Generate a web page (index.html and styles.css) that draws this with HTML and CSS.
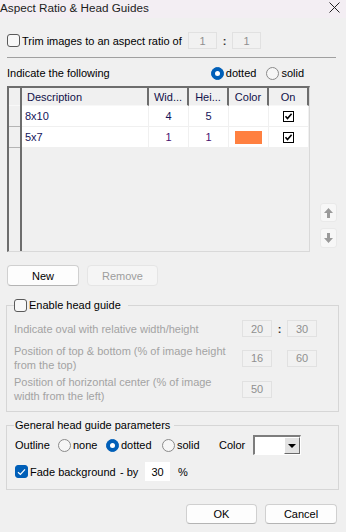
FILE: index.html
```html
<!DOCTYPE html>
<html lang="en">
<head>
    <meta charset="utf-8">
    <title>Aspect Ratio &amp; Head Guides</title>
<link rel="stylesheet" href="styles.css">
</head>
<body>
    <div id="titlebar">
        <span class="title">Aspect Ratio &amp; Head Guides</span>
        <svg class="close" width="11" height="11" viewBox="0 0 11 11"><path d="M0.5 0.5L10.5 10.5M10.5 0.5L0.5 10.5" stroke="#222" stroke-width="1"/></svg>
    </div>
    <div id="dialog">
        <div class="trimRow">
            <span class="check"></span>
            <span class="trimLabel">Trim images to an aspect ratio of</span>
            <span class="field off">1</span><span class="colon">:</span><span class="field off">1</span>
        </div>
        <div class="rule"></div>
        <div class="indicateRow">
            <span>Indicate the following</span>
            <span class="radios">
                <span class="radio on"></span><span class="rlabel">dotted</span>
                <span class="radio"></span><span class="rlabel">solid</span>
            </span>
        </div>
        <div class="gridRow">
            <div class="grid">
                <div class="gridSide">
                    <div class="corner"></div>
                    <div class="rowHead"></div>
                    <div class="rowHead"></div>
                </div>
                <div class="gridMain">
                    <div class="gridLine head">
                        <span class="desc">Description</span><span>Wid...</span><span>Hei...</span><span>Color</span><span>On</span>
                    </div>
                    <div class="gridLine">
                        <span class="desc">8x10</span><span>4</span><span>5</span><span></span>
                        <span><svg width="11" height="11" viewBox="0 0 11 11"><rect x="0.5" y="0.5" width="10" height="10" fill="#fff" stroke="#000"/><path d="M2.5 5.2L4.5 7.5L8.6 2.8" fill="none" stroke="#000" stroke-width="1.6"/></svg></span>
                    </div>
                    <div class="gridLine">
                        <span class="desc">5x7</span><span class="purple">1</span><span class="purple">1</span><span><i class="swatch"></i></span>
                        <span><svg width="11" height="11" viewBox="0 0 11 11"><rect x="0.5" y="0.5" width="10" height="10" fill="#fff" stroke="#000"/><path d="M2.5 5.2L4.5 7.5L8.6 2.8" fill="none" stroke="#000" stroke-width="1.6"/></svg></span>
                    </div>
                </div>
            </div>
            <div class="movers">
                <button class="mover"><svg width="9" height="10" viewBox="0 0 9 10"><path d="M4.5 0L9 5H6V10H3V5H0Z" fill="#9a9a9a"/></svg></button>
                <button class="mover"><svg width="9" height="10" viewBox="0 0 9 10"><path d="M4.5 10L9 5H6V0H3V5H0Z" fill="#9a9a9a"/></svg></button>
            </div>
        </div>
        <div class="btnRow">
            <button class="btn">New</button>
            <button class="btn off">Remove</button>
        </div>

        <fieldset class="group guide">
            <legend><span class="check"></span><span>Enable head guide</span></legend>
            <div class="guideRow first">
                <span class="guideLabel">Indicate oval with relative width/height</span>
                <span class="field off">20</span><span class="colon">:</span><span class="field off">30</span>
            </div>
            <div class="guideRow second">
                <span class="guideLabel">Position of top &amp; bottom (% of image height from the top)</span>
                <span class="field off">16</span><span class="colon"></span><span class="field off">60</span>
            </div>
            <div class="guideRow third">
                <span class="guideLabel">Position of horizontal center (% of image width from the left)</span>
                <span class="field off">50</span>
            </div>
        </fieldset>

        <fieldset class="group general">
            <legend>General head guide parameters</legend>
            <div class="outlineRow">
                <span class="olabel">Outline</span>
                <span class="opt none"><span class="radio"></span><span class="rlabel">none</span></span>
                <span class="opt dotted"><span class="radio on"></span><span class="rlabel">dotted</span></span>
                <span class="opt solid"><span class="radio"></span><span class="rlabel">solid</span></span>
                <span class="colorLabel">Color</span>
                <span class="combo"><span class="comboField"></span><span class="comboBtn"><i></i></span></span>
            </div>
            <div class="fadeRow">
                <span class="check on"><svg width="9" height="8" viewBox="0 0 9 8"><path d="M1 4.2L3.4 6.5L8 1.3" fill="none" stroke="#fff" stroke-width="1.2"/></svg></span>
                <span class="fadeLabel">Fade background</span>
                <span class="by">- by</span>
                <span class="field white">30</span>
                <span class="pct">%</span>
            </div>
        </fieldset>

        <div class="footer">
            <button class="btn ok">OK</button>
            <button class="btn cancel">Cancel</button>
        </div>
    </div>
</body>
</html>
```

FILE: styles.css
```css
body{
    margin: 0;
    width: 346px;
    height: 532px;
    overflow: hidden;
    background-color: #f0f0f0;
    font-family: 'Liberation Sans', Arial, sans-serif;
    font-size: 11px;
    color: #000;
}
#titlebar{
    height: 18px;
    background-color: #f3eef3;
    display: flex;
    justify-content: space-between;
    align-items: flex-start;
}
.title{
    font-size: 11.7px;
    line-height: 14px;
    color: #1c1c1c;
    margin-top: 1px;
}
.close{
    margin: 2px 6px 0 0;
}
#dialog{
    padding: 0 7px;
}

/* checkboxes and radios */
.check{
    width: 11px;
    height: 11px;
    border: 1px solid #5a5a5a;
    border-radius: 3px;
    background-color: #f8f8f8;
    display: inline-flex;
    align-items: center;
    justify-content: center;
    flex: none;
}
.check.on{
    background-color: #005fb8;
    border-color: #005fb8;
}
.radio{
    width: 11px;
    height: 11px;
    border: 1px solid #8a8a8a;
    border-radius: 50%;
    background-color: #f6f6f6;
    display: inline-flex;
    align-items: center;
    justify-content: center;
    flex: none;
}
.radio.on{
    background-color: #005fb8;
    border-color: #005fb8;
}
.radio.on::after{
    content: "";
    width: 5px;
    height: 5px;
    border-radius: 50%;
    background-color: #fff;
}
.rlabel{
    margin-left: 2px;
}

/* small text boxes */
.field{
    width: 29px;
    height: 17px;
    box-sizing: border-box;
    border: 1px solid #e1e1e1;
    background-color: #f1f1f1;
    display: inline-flex;
    align-items: center;
    justify-content: center;
    flex: none;
}
.field.off{
    color: #8f8f8f;
}
.field.white{
    background-color: #fff;
    border-color: #fff;
    width: 25px;
    height: 19px;
}
.colon{
    width: 15px;
    text-align: center;
    font-weight: bold;
    color: #333;
}

.trimRow{
    margin-top: 14px;
    height: 17px;
    display: flex;
    align-items: center;
}
.trimRow .check{
    margin-right: 2px;
}
.trimLabel{
    width: 166px;
}
.rule{
    margin-top: 8px;
    width: 329px;
    height: 1px;
    background-color: #a0a0a0;
}
.indicateRow{
    margin-top: 8px;
    height: 14px;
    display: flex;
    align-items: center;
}
.radios{
    margin-left: auto;
    margin-right: 35px;
    display: flex;
    align-items: center;
}
.radios .rlabel:nth-child(2){
    margin-right: 10px;
}

/* grid */
.gridRow{
    margin-top: 6px;
    display: flex;
}
.grid{
    width: 303px;
    height: 166px;
    box-sizing: border-box;
    border-top: 2px solid #6d6d6d;
    border-left: 2px solid #6d6d6d;
    border-right: 1px solid #d9d9d9;
    border-bottom: 1px solid #d9d9d9;
    display: flex;
    color: #14145a;
}
.gridSide{
    width: 11px;
    border-right: 2px solid #6d6d6d;
}
.corner{
    height: 17px;
    border-bottom: 1px solid #f8f8f8;
}
.rowHead{
    height: 20px;
    border-bottom: 1px solid #b4b4b4;
}
.gridMain{
    width: 287px;
}
.gridLine{
    display: grid;
    grid-template-columns: 127px 40px 40px 40px 40px;
    height: 21px;
}
.gridLine span{
    box-sizing: border-box;
    border-right: 1px solid #f0f0f0;
    border-bottom: 1px solid #f0f0f0;
    background-color: #fff;
    display: flex;
    align-items: center;
    justify-content: center;
}
.gridLine .desc{
    justify-content: flex-start;
    padding-left: 3px;
}
.gridLine.head{
    height: 18px;
}
.gridLine.head span{
    background-color: #f0f0f0;
    border-right: 2px solid #6d6d6d;
    border-bottom: 1px solid #f8f8f8;
    color: #10104a;
}
.gridLine.head .desc{
    padding-left: 5px;
}
.purple{
    color: #4a1070;
}
.swatch{
    width: 27px;
    height: 13px;
    background-color: #ff8040;
}
.movers{
    margin-left: 10px;
    align-self: flex-end;
    margin-bottom: 4px;
    display: flex;
    flex-direction: column;
    gap: 6px;
}
.mover{
    width: 17px;
    height: 19px;
    padding: 0;
    border: 1px solid #e9e9e9;
    border-radius: 3px;
    background-color: #f7f7f7;
    display: flex;
    align-items: center;
    justify-content: center;
}
.mover + .mover{
    height: 20px;
}

/* buttons */
.btn{
    font-family: 'Liberation Sans', Arial, sans-serif;
    font-size: 11px;
    color: #000;
    height: 21px;
    padding: 0;
    background-color: #fdfdfd;
    border: 1px solid #d0d0d0;
    border-bottom-color: #b4b4b4;
    border-radius: 4px;
}
.btn.off{
    background-color: #f5f5f5;
    border-color: #e5e5e5;
    color: #9d9d9d;
}
.btnRow{
    margin-top: 13px;
    display: flex;
    gap: 8px;
}
.btnRow .btn{
    width: 72px;
}
.btnRow .btn.off{
    width: 71px;
}

/* group boxes */
.group{
    margin: 12px 0 0 -1px;
    width: 333px;
    box-sizing: border-box;
    padding: 0 7px 8px 7px;
    border: 1px solid #d6d6d6;
    min-width: 0;
}
.group legend{
    padding: 0 7px 0 0;
    line-height: 14px;
    height: 14px;
    display: flex;
    align-items: center;
}
.group legend .check{
    margin-right: 2px;
}
.guideRow{
    display: flex;
    align-items: center;
    color: #a3a3a3;
}
.guideRow .field{
    width: 30px;
}
.guideLabel{
    width: 228px;
    box-sizing: border-box;
    line-height: 14px;
}
.guideRow.first{
    margin-top: 8px;
}
.guideRow.second{
    margin-top: 7px;
}
.guideRow.third{
    margin-top: 3px;
}
.guideRow.third .guideLabel{
    padding-right: 18px;
}

.general{
    margin-top: 6px;
    padding-bottom: 8px;
}
.general legend{
    padding: 0 4px 0 1px;
}
.outlineRow{
    margin-top: 3px;
    height: 20px;
    display: flex;
    align-items: center;
    padding-left: 1px;
}
.olabel{
    width: 43px;
}
.opt{
    display: flex;
    align-items: center;
}
.opt.none{
    width: 48px;
}
.opt.dotted{
    width: 56px;
}
.opt.solid{
    width: 57px;
}
.colorLabel{
    width: 34px;
}
.combo{
    width: 48px;
    height: 20px;
    box-sizing: border-box;
    border-top: 2px solid #7d7d7d;
    border-left: 2px solid #7d7d7d;
    border-right: 1px solid #fff;
    border-bottom: 1px solid #fff;
    display: flex;
    background-color: #fff;
}
.comboField{
    flex: 1;
}
.comboBtn{
    width: 16px;
    box-sizing: border-box;
    background-color: #e3e3e3;
    border-left: 1px solid #fff;
    border-top: 1px solid #fff;
    border-right: 1px solid #6a6a6a;
    border-bottom: 1px solid #6a6a6a;
    display: flex;
    align-items: center;
    justify-content: center;
}
.comboBtn i{
    width: 0;
    height: 0;
    border-left: 4px solid transparent;
    border-right: 4px solid transparent;
    border-top: 4px solid #000;
}
.fadeRow{
    margin-top: 7px;
    height: 19px;
    display: flex;
    align-items: center;
    padding-left: 1px;
}
.fadeRow .check{
    margin-right: 2px;
}
.fadeLabel{
    width: 90px;
}
.by{
    width: 25px;
}
.pct{
    margin-left: 8px;
}

.footer{
    margin-top: 14px;
    display: flex;
    justify-content: flex-end;
    gap: 8px;
    padding-right: 2px;
}
.footer .btn{
    height: 20px;
}
.ok{
    width: 71px;
}
.cancel{
    width: 72px;
}
```
